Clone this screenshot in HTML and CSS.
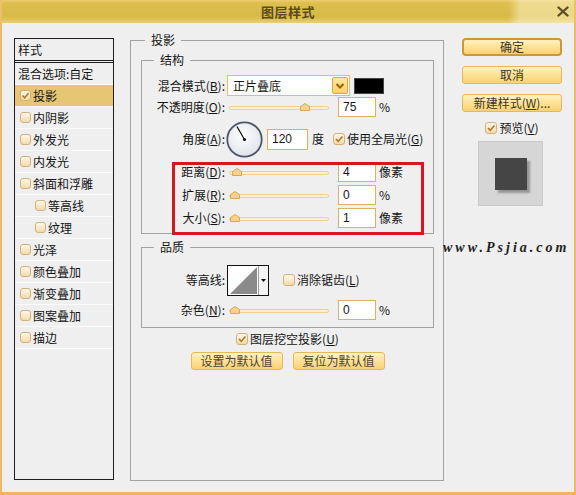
FILE: index.html
```html
<!DOCTYPE html>
<html>
<head>
<meta charset="utf-8">
<link rel="stylesheet" href="styles.css">
</head>
<body>
<div class="window">
  <div class="titlebar">
    <span></span>
    <span class="title">图层样式</span>
    <span class="close"><svg width="12" height="11" viewBox="0 0 12 11"><path d="M1.5 1.5 L10.5 9.5 M10.5 1.5 L1.5 9.5" stroke="#5a4a26" stroke-width="2.3" stroke-linecap="round"/></svg></span>
  </div>
  <div class="frame">
    <div class="stylelist">
      <div class="list-head">样式</div>
      <div class="item plain">混合选项:自定</div>
      <div class="item selected"><span class="cb"><svg width="9" height="9" viewBox="0 0 9 9"><path d="M1.5 4.5 L3.6 6.8 L7.6 2" fill="none" stroke="#b07632" stroke-width="1.5"/></svg></span>投影</div>
      <div class="item"><span class="cb"></span>内阴影</div>
      <div class="item"><span class="cb"></span>外发光</div>
      <div class="item"><span class="cb"></span>内发光</div>
      <div class="item"><span class="cb"></span>斜面和浮雕</div>
      <div class="item sub"><span class="cb"></span>等高线</div>
      <div class="item sub"><span class="cb"></span>纹理</div>
      <div class="item"><span class="cb"></span>光泽</div>
      <div class="item"><span class="cb"></span>颜色叠加</div>
      <div class="item"><span class="cb"></span>渐变叠加</div>
      <div class="item"><span class="cb"></span>图案叠加</div>
      <div class="item"><span class="cb"></span>描边</div>
    </div>

    <div class="main">
      <div class="group outer">
        <span class="legend">投影</span>
        <div class="group struct">
          <span class="legend">结构</span>
          <div class="row r-select">
            <span class="label">混合模式(<u>B</u>):</span>
            <div class="select"><span class="select-text">正片叠底</span><span class="select-btn"><svg width="10" height="8" viewBox="0 0 10 8"><path d="M1.5 2 L5 5.5 L8.5 2" fill="none" stroke="#9a5e0e" stroke-width="2"/></svg></span></div>
            <span class="swatch"></span>
          </div>
          <div class="row r-22">
            <span class="label">不透明度(<u>O</u>):</span>
            <div class="slider"><div class="track"></div><span class="thumb" style="left:71px"><svg width="10" height="8" viewBox="0 0 10 8"><path d="M0.5 7.5 V3.5 L5 0.5 L9.5 3.5 V7.5 Z" fill="#f6d28e" stroke="#dca55a"/></svg></span></div>
            <span class="num">75</span>
            <span class="unit">%</span>
          </div>
          <div class="row r-angle">
            <span class="label">角度(<u>A</u>):</span>
            <span class="dial"><svg width="37" height="37" viewBox="0 0 37 37"><defs><radialGradient id="dg" cx="45%" cy="40%" r="60%"><stop offset="0" stop-color="#ffffff"/><stop offset="1" stop-color="#dfe3ea"/></radialGradient></defs><circle cx="18.5" cy="18.5" r="17.2" fill="url(#dg)" stroke="#4d5569" stroke-width="1.8"/><path d="M18.5 18.5 L11 5.6" stroke="#111" stroke-width="1.2"/><circle cx="18.5" cy="18.5" r="1.6" fill="#111"/></svg></span>
            <span class="num angle">120</span>
            <span class="unit deg">度</span>
            <span class="cb global"><svg width="10" height="10" viewBox="0 0 10 10"><path d="M2 5 L4.2 7.4 L8.4 2.4" fill="none" stroke="#b07632" stroke-width="1.6"/></svg></span>
            <span class="cbtext">使用全局光(<u>G</u>)</span>
          </div>
          <div class="row r-23">
            <span class="label">距离(<u>D</u>):</span>
            <div class="slider"><div class="track"></div><span class="thumb" style="left:3px"><svg width="10" height="8" viewBox="0 0 10 8"><path d="M0.5 7.5 V3.5 L5 0.5 L9.5 3.5 V7.5 Z" fill="#f6d28e" stroke="#dca55a"/></svg></span></div>
            <span class="num">4</span>
            <span class="unit">像素</span>
          </div>
          <div class="row r-23">
            <span class="label">扩展(<u>R</u>):</span>
            <div class="slider"><div class="track"></div><span class="thumb" style="left:1px"><svg width="10" height="8" viewBox="0 0 10 8"><path d="M0.5 7.5 V3.5 L5 0.5 L9.5 3.5 V7.5 Z" fill="#f6d28e" stroke="#dca55a"/></svg></span></div>
            <span class="num">0</span>
            <span class="unit">%</span>
          </div>
          <div class="row r-23">
            <span class="label">大小(<u>S</u>):</span>
            <div class="slider"><div class="track"></div><span class="thumb" style="left:1px"><svg width="10" height="8" viewBox="0 0 10 8"><path d="M0.5 7.5 V3.5 L5 0.5 L9.5 3.5 V7.5 Z" fill="#f6d28e" stroke="#dca55a"/></svg></span></div>
            <span class="num">1</span>
            <span class="unit">像素</span>
          </div>
          <div class="redbox"></div>
        </div>

        <div class="group quality">
          <span class="legend">品质</span>
          <div class="row r-contour">
            <span class="label">等高线:</span>
            <div class="contour">
              <span class="contour-img"><svg width="30" height="29" viewBox="0 0 30 29"><rect width="30" height="29" fill="#fff"/><path d="M2 28 L29 1 V28 Z" fill="#8a8a8a"/></svg></span>
              <span class="contour-btn"><svg width="7" height="5" viewBox="0 0 7 5"><path d="M1 1 H6 L3.5 4 Z" fill="#111"/></svg></span>
            </div>
            <span class="cb anti"></span>
            <span class="cbtext">消除锯齿(<u>L</u>)</span>
          </div>
          <div class="row r-noise">
            <span class="label">杂色(<u>N</u>):</span>
            <div class="slider"><div class="track"></div><span class="thumb" style="left:1px"><svg width="10" height="8" viewBox="0 0 10 8"><path d="M0.5 7.5 V3.5 L5 0.5 L9.5 3.5 V7.5 Z" fill="#f6d28e" stroke="#dca55a"/></svg></span></div>
            <span class="num">0</span>
            <span class="unit">%</span>
          </div>
        </div>

        <div class="row knockout">
          <span class="cb"><svg width="10" height="10" viewBox="0 0 10 10"><path d="M2 5 L4.2 7.4 L8.4 2.4" fill="none" stroke="#b07632" stroke-width="1.6"/></svg></span>
          <span class="cbtext">图层挖空投影(<u>U</u>)</span>
        </div>
        <div class="row defaults">
          <span class="btn wide">设置为默认值</span>
          <span class="btn wide">复位为默认值</span>
        </div>
      </div>
    </div>

    <div class="side">
      <span class="btn primary">确定</span>
      <span class="btn">取消</span>
      <span class="btn">新建样式(<u>W</u>)...</span>
      <div class="row preview-row">
        <span class="cb"><svg width="10" height="10" viewBox="0 0 10 10"><path d="M2 5 L4.2 7.4 L8.4 2.4" fill="none" stroke="#b07632" stroke-width="1.6"/></svg></span>
        <span class="cbtext">预览(<u>V</u>)</span>
      </div>
      <div class="preview"><div class="square"></div></div>
    </div>
  </div>
  <div class="watermark">www.Psjia.com</div>
</div>
</body>
</html>
```

FILE: styles.css
```css
* { box-sizing: border-box; }

body {
  margin: 0;
  font-family: "Noto Sans CJK SC", "Noto Sans", sans-serif;
  font-size: 12px;
  line-height: 14px;
  color: #141414;
}

u { text-decoration: underline; text-underline-offset: 1px; }

.window {
  position: relative;
  width: 576px;
  height: 495px;
  display: flex;
  flex-direction: column;
  background: #efefef;
  overflow: hidden;
}

.titlebar {
  flex: none;
  height: 23px;
  display: grid;
  grid-template-columns: 1fr auto 1fr;
  align-items: center;
  background:
    linear-gradient(to right, rgba(255,255,255,0) 88.5%, rgba(255,246,205,0.5) 90.5%),
    linear-gradient(#f0cc72 0, #dcbf4e 3px, #d7b946 16px, #dfc35a 20px, #ead07e 23px);
  border-left: 2px solid #ecc06a;
  border-right: 2px solid #ecc06a;
}

.title {
  font-weight: bold;
  font-size: 13px;
  color: #5c4b1c;
  letter-spacing: 0.5px;
}

.close {
  justify-self: end;
  margin-right: 5px;
  display: flex;
}

.frame {
  flex: 1;
  display: flex;
  align-items: flex-start;
  padding: 15px 0 0 12px;
  border-left: 2px solid #ebb968;
  border-right: 2px solid #ebb968;
  border-bottom: 3px solid #ebb565;
  box-shadow: inset 0 1px 0 #f8efd6;
}

/* left styles list */
.stylelist {
  flex: none;
  width: 100px;
  height: 442px;
  border: 1px solid #1c1c1c;
}

.list-head {
  height: 24px;
  padding: 4px 0 0 3px;
  border-bottom: 3px double #1c1c1c;
}

.item {
  height: 22px;
  display: flex;
  align-items: center;
  padding-left: 5px;
  border-bottom: 1px solid #fbfbfb;
}

.item.plain { padding-left: 3px; }
.item.sub { padding-left: 20px; }
.item.selected { background: #e6c674; }
.item .cb { margin-right: 2px; width: 11px; height: 11px; }

.cb {
  flex: none;
  width: 12px;
  height: 12px;
  border: 1px solid #d3b07c;
  border-radius: 3px;
  background: linear-gradient(#fff8ea, #f2d9a9);
  display: flex;
  align-items: center;
  justify-content: center;
}

.cbtext { margin-left: 2px; white-space: nowrap; }

/* main panel */
.main {
  flex: none;
  width: 314px;
  height: 441px;
  margin: 2px 0 0 16px;
}

.group {
  position: relative;
  border: 1px solid #a2a2a2;
}

.legend {
  position: absolute;
  top: -8px;
  left: 12px;
  padding: 0 6px;
  background: #efefef;
  line-height: 14px;
}

.outer {
  height: 441px;
  padding: 19px 9px 0 10px;
}

.outer > .legend { left: 14px; padding: 0 6px; }

.struct {
  height: 174px;
  padding: 14px 0 4px 0;
}

.row { display: flex; align-items: center; }

.label {
  flex: none;
  width: 83px;
  text-align: right;
  white-space: nowrap;
}

.r-select { height: 21px; }
.r-22 { height: 22px; }
.r-angle { height: 42px; }
.r-23 { height: 23px; }

.select {
  margin-left: 2px;
  width: 123px;
  height: 21px;
  border: 1px solid #ebbd63;
  background: #fff;
  display: flex;
  align-items: center;
}

.select-text { flex: 1; padding-left: 5px; }

.select-btn {
  width: 16px;
  height: 17px;
  margin-right: 1px;
  border: 1px solid #dba648;
  border-radius: 2px;
  background: linear-gradient(#fee9a0, #f9d468);
  display: flex;
  align-items: center;
  justify-content: center;
}

.swatch {
  margin-left: 4px;
  width: 30px;
  height: 16px;
  background: #000;
  border: 1px solid #444;
}

.slider {
  position: relative;
  flex: none;
  margin-left: 4px;
  width: 100px;
  height: 12px;
}

.track {
  margin-top: 5px;
  height: 4px;
  border: 1px solid #efcf93;
  border-radius: 2px;
  background: #fdf0d0;
}

.thumb {
  position: absolute;
  top: 2px;
  display: flex;
}

.num {
  flex: none;
  margin-left: 9px;
  width: 38px;
  height: 20px;
  border: 1px solid #ddb165;
  background: #fff;
  padding-left: 4px;
  display: flex;
  align-items: center;
  font-family: "Liberation Sans", "Noto Sans", sans-serif;
}

.num.angle { margin-left: 4px; width: 41px; height: 21px; }

.unit { margin-left: 3px; white-space: nowrap; }
.unit.deg { margin-left: 4px; }

.dial { margin-left: 1px; display: flex; }

.cb.global { margin-left: 9px; }

.redbox {
  position: absolute;
  left: 30px;
  top: 101px;
  width: 252px;
  height: 73px;
  border: 3px solid #d8161d;
}

.quality {
  margin-top: 13px;
  height: 81px;
  padding: 15px 0 5px 0;
}

.r-contour { height: 34px; }
.r-noise { height: 25px; }

.contour {
  margin-left: 2px;
  width: 42px;
  height: 31px;
  border: 1px solid #111;
  display: flex;
}

.contour-img { display: flex; width: 30px; }

.contour-btn {
  flex: 1;
  border-left: 1px solid #9a9a9a;
  background: #f4f4f4;
  display: flex;
  align-items: center;
  justify-content: center;
}

.cb.anti { margin-left: 14px; }

.knockout {
  height: 21px;
  justify-content: center;
}

.defaults {
  margin-top: 3px;
  justify-content: center;
  gap: 10px;
}

.btn {
  display: flex;
  align-items: center;
  justify-content: center;
  height: 18px;
  border: 1px solid #e6b75c;
  border-radius: 3px;
  background: linear-gradient(#fff2c2, #fde39a 45%, #f8d273);
  color: #3a3526;
  white-space: nowrap;
}

.btn.wide { width: 92px; color: #4a4536; }

/* right column */
.side {
  flex: none;
  width: 100px;
  margin-left: 18px;
  display: flex;
  flex-direction: column;
}

.side .btn + .btn { margin-top: 10px; }

.btn.primary {
  border: 2px solid #cf9636;
  border-radius: 4px;
}

.preview-row {
  margin-top: 7px;
  height: 18px;
  justify-content: center;
}

.preview {
  margin: 4px 0 0 16px;
  width: 65px;
  height: 65px;
  border: 1px solid #c9c9c9;
  background: #d6d6d6;
  padding: 16px;
}

.square {
  width: 32px;
  height: 32px;
  background: #454545;
  box-shadow: 3px 3px 2px rgba(0,0,0,0.3);
}

.watermark {
  position: absolute;
  left: 443px;
  top: 240px;
  font-family: "Liberation Serif", serif;
  font-style: italic;
  font-weight: bold;
  font-size: 14px;
  letter-spacing: 3px;
  color: #1e1e1e;
  line-height: 16px;
}
```
